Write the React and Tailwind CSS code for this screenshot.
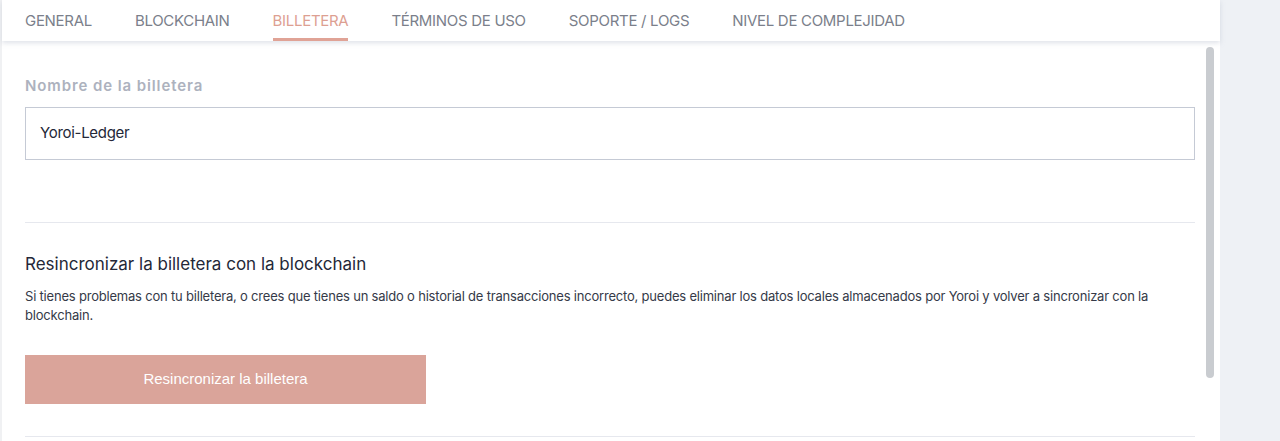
import React from 'react';

const tabs = ['GENERAL', 'BLOCKCHAIN', 'BILLETERA', 'TÉRMINOS DE USO', 'SOPORTE / LOGS', 'NIVEL DE COMPLEJIDAD'];

function App() {
  return (
    <div className="flex h-[441px] w-[1280px] overflow-hidden bg-[#eef1f5]" style={{ fontFamily: 'Inter, "Noto Sans", sans-serif' }}>
      <div className="flex w-[1220px] flex-col bg-white border-l-2 border-[#f0f1f3]">
        <div className="relative z-10 flex h-[41px] shrink-0 items-stretch gap-[43px] bg-white pl-[23px] shadow-[0_2px_5px_rgba(160,170,190,0.35)]">
          {tabs.map((t) => (
            <div
              key={t}
              className={`flex items-center border-b-[3px] pt-[5px] text-[15px] tracking-[-0.3px] ${
                t === 'BILLETERA' ? 'border-[#e0a396] text-[#dd9f92]' : 'border-transparent text-[#7b7f8b]'
              }`}
            >
              {t}
            </div>
          ))}
        </div>
        <div className="flex flex-1">
          <div className="flex-1 pl-[23px]">
            <div className="pt-[34px] text-[15px] font-semibold tracking-[0.9px] text-[#adb2be]">Nombre de la billetera</div>
            <div className="mt-[9px] flex h-[53px] items-center border border-[#c5cad5] px-[14px] text-[15px] tracking-[-0.3px] text-[#242838]">
              Yoroi-Ledger
            </div>
            <div className="mt-[62px] h-px bg-[#e6e8ee]" />
            <div className="pt-[29px] text-[17px] text-[#242838]">Resincronizar la billetera con la blockchain</div>
            <p className="mt-[10px] text-[13px] leading-[19px] tracking-[-0.2px] text-[#353a48]">
              Si tienes problemas con tu billetera, o crees que tienes un saldo o historial de transacciones incorrecto, puedes eliminar los datos locales almacenados por Yoroi y volver a sincronizar con la blockchain.
            </p>
            <button
              className="mt-[30px] flex h-[49px] w-[401px] items-center justify-center bg-[#daa49a] text-[15px] text-white"
              style={{ fontFamily: '"Liberation Sans", Arial, sans-serif' }}
            >
              Resincronizar la billetera
            </button>
            <div className="mt-[32px] h-px bg-[#e6e8ee]" />
          </div>
          <div className="w-[25px] shrink-0 pt-[6px] pl-[11px]">
            <div className="h-[331px] w-[8px] rounded-full bg-[#c9ccd0]" />
          </div>
        </div>
      </div>
    </div>
  );
}

export default App;
